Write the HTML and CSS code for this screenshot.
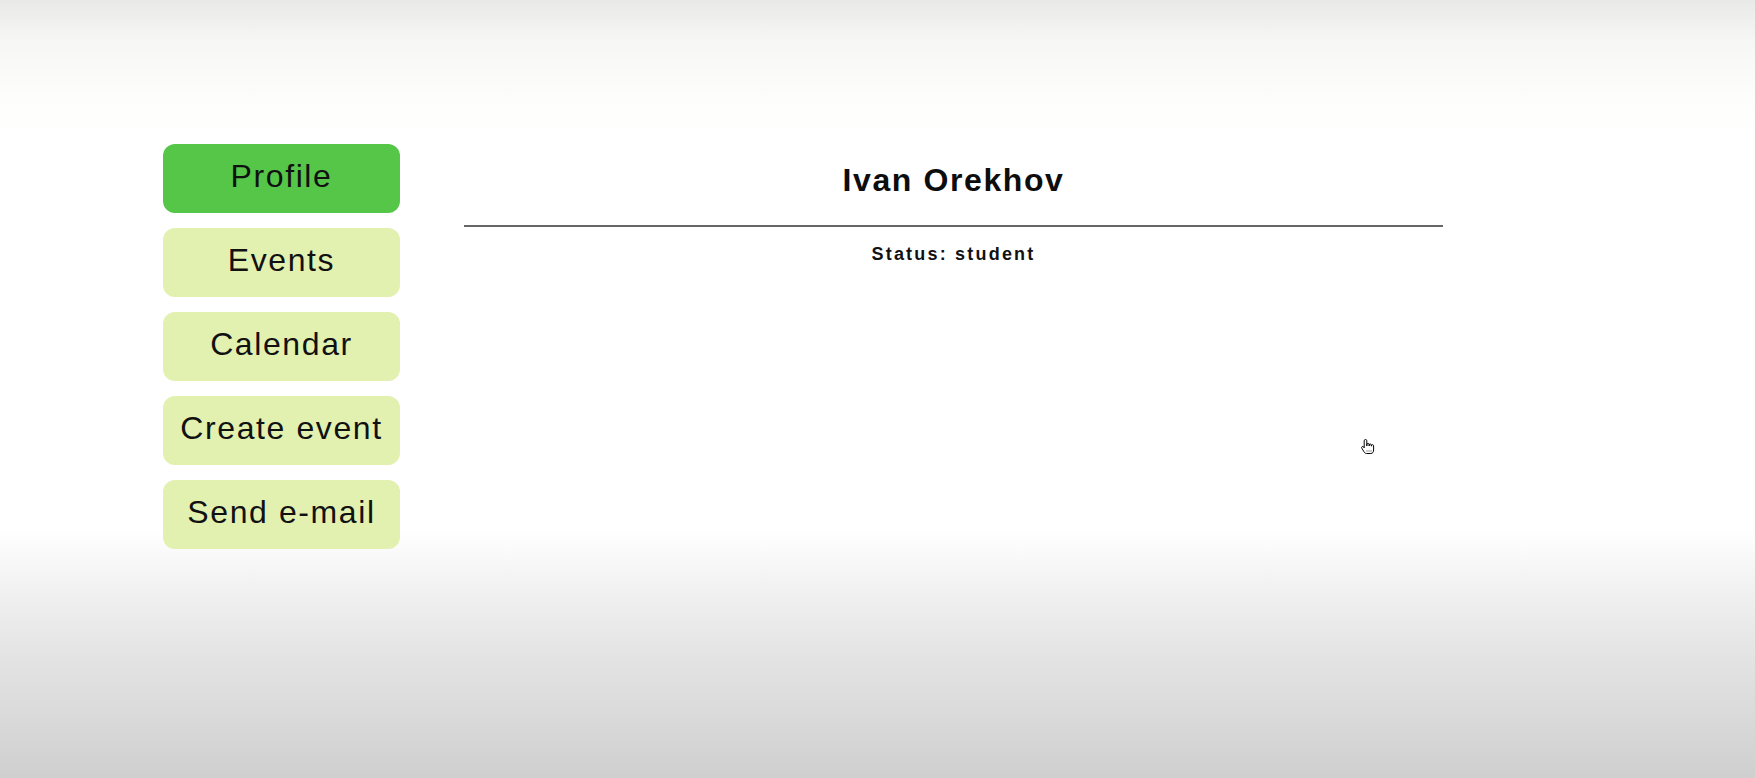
FILE: index.html
```html
<!DOCTYPE html>
<html lang="en">
<head>
<meta charset="utf-8">
<title>Profile</title>
<link rel="stylesheet" href="styles.css">
</head>
<body>
<div class="page">
  <nav class="menu">
    <a class="menu-item active" href="#">Profile</a>
    <a class="menu-item" href="#">Events</a>
    <a class="menu-item" href="#">Calendar</a>
    <a class="menu-item" href="#">Create event</a>
    <a class="menu-item" href="#">Send e-mail</a>
  </nav>
  <main class="profile">
    <h1 class="name">Ivan Orekhov</h1>
    <div class="divider"></div>
    <p class="status">Status: student</p>
  </main>
</div>
<svg class="cursor" width="18" height="18" viewBox="0 0 18 18" xmlns="http://www.w3.org/2000/svg">
  <path d="M5.5 1.5 C6.3 1.5 6.8 2 6.8 2.8 V8 V6.6 C6.8 5.9 7.3 5.5 8 5.5 C8.7 5.5 9.2 5.9 9.2 6.6 V8 V7 C9.2 6.4 9.7 6 10.3 6 C10.9 6 11.4 6.4 11.4 7 V8.2 V7.6 C11.4 7 11.9 6.7 12.5 6.7 C13.1 6.7 13.6 7.1 13.6 7.7 V12 C13.6 14 12.6 15.5 10.8 15.5 H6.5 C5.4 15.5 4.6 14.8 4 13.8 L1.8 10.2 C1.4 9.6 1.6 8.9 2.2 8.6 C2.8 8.3 3.4 8.6 3.8 9.1 L4.2 9.8 V2.8 C4.2 2 4.7 1.5 5.5 1.5 Z" fill="#fff" stroke="#000" stroke-width="1"/>
  <path d="M7 12.5 V13.5 M9 12.5 V13.5 M11 12.5 V13.5" stroke="#000" stroke-width="0.8"/>
</svg>
</body>
</html>
```

FILE: styles.css
```css
html, body {
  margin: 0;
  padding: 0;
}

body {
  width: 1755px;
  height: 778px;
  overflow: hidden;
  font-family: "Liberation Sans", Arial, sans-serif;
  color: #111;
  background: linear-gradient(to bottom,
    #e9e9e8 0px,
    #f6f6f5 40px,
    #fdfdfc 100px,
    #ffffff 140px,
    #ffffff 530px,
    #f1f1f1 590px,
    #e3e3e3 660px,
    #d9d9d9 720px,
    #cfcfcf 778px);
  position: relative;
}

.page {
  display: flex;
  align-items: flex-start;
  padding: 144px 0 0 163px;
}

.menu {
  display: flex;
  flex-direction: column;
  gap: 15px;
  width: 237px;
  flex: none;
}

.menu-item {
  display: flex;
  align-items: center;
  justify-content: center;
  height: 69px;
  box-sizing: border-box;
  padding-bottom: 4px;
  border-radius: 12px;
  background: #e2f0b0;
  color: #111;
  text-decoration: none;
  font-size: 32px;
  letter-spacing: 1.6px;
  white-space: nowrap;
}

.menu-item.active {
  background: #55c648;
}

.profile {
  margin: 18px 0 0 64px;
  width: 979px;
  display: flex;
  flex-direction: column;
  align-items: center;
}

.name {
  margin: 0;
  font-size: 32px;
  font-weight: bold;
  letter-spacing: 1.6px;
  line-height: 37px;
  color: #0d0d0d;
}

.divider {
  align-self: stretch;
  height: 2px;
  background: #666;
  margin-top: 26px;
}

.status {
  margin: 17px 0 0;
  font-size: 18px;
  font-weight: bold;
  letter-spacing: 2.2px;
  line-height: 21px;
  color: #111;
}

.cursor {
  position: absolute;
  left: 1360px;
  top: 438px;
}
```
